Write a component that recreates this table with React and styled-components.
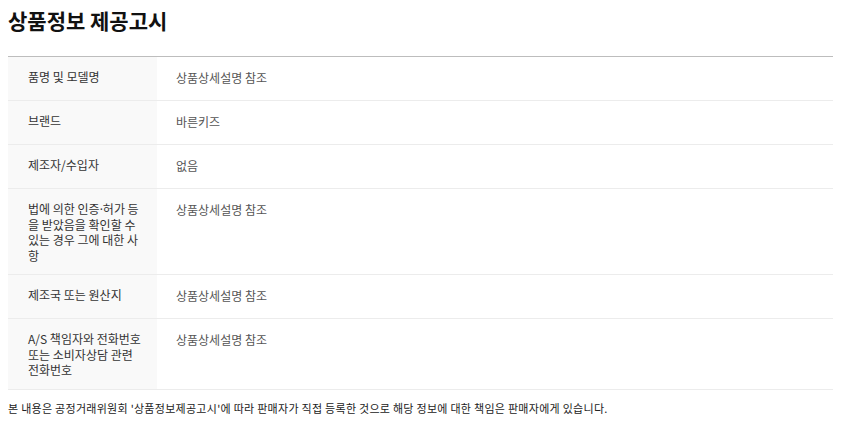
import React from "react";
import styled, { createGlobalStyle } from "styled-components";

const Global = createGlobalStyle`
  html, body { margin: 0; padding: 0; background: #fff; }
  body { font-family: "Noto Sans CJK KR", "Noto Sans", sans-serif; color: #333; }
`;

const Page = styled.div`
  padding: 0 13px 0 8px;
`;

const Title = styled.h2`
  margin: 0;
  padding-top: 5px;
  height: 56px;
  box-sizing: border-box;
  font-size: 21px;
  line-height: 30px;
  font-weight: 700;
  color: #111;
`;

const Table = styled.div`
  border-top: 1px solid #bdbdbd;
  display: grid;
  grid-template-columns: 149px 1fr;
`;

const Row = styled.div`
  display: contents;
`;

const Head = styled.div`
  background: #f9f9f9;
  border-bottom: 1px solid #ececec;
  padding: 12px 15.5px 11px 20px;
  font-size: 12px;
  line-height: 15.5px;
  color: #333;
`;

const Dot = styled.span`
  font-family: "Noto Sans", sans-serif;
  line-height: 0;
`;

const Value = styled.div`
  border-bottom: 1px solid #ececec;
  padding: 10px 20px 11px 19px;
  font-size: 12px;
  line-height: 22px;
  color: #555;
`;

const Notice = styled.p`
  margin: 10px 0 0;
  font-size: 11px;
  line-height: 16px;
  letter-spacing: 0.28px;
  color: #222;
`;

const rows = [
  ["품명 및 모델명", "상품상세설명 참조"],
  ["브랜드", "바른키즈"],
  ["제조자/수입자", "없음"],
  [<>법에 의한 인증<Dot>·</Dot>허가 등을 받았음을 확인할 수 있는 경우 그에 대한 사항</>, "상품상세설명 참조"],
  ["제조국 또는 원산지", "상품상세설명 참조"],
  ["A/S 책임자와 전화번호 또는 소비자상담 관련 전화번호", "상품상세설명 참조"],
];

export default function App() {
  return (
    <Page>
      <Global />
      <Title>상품정보 제공고시</Title>
      <Table>
        {rows.map(([h, v], i) => (
          <Row key={i}>
            <Head>{h}</Head>
            <Value>{v}</Value>
          </Row>
        ))}
      </Table>
      <Notice>
        본 내용은 공정거래위원회 '상품정보제공고시'에 따라 판매자가 직접 등록한 것으로 해당 정보에 대한 책임은 판매자에게 있습니다.
      </Notice>
    </Page>
  );
}
